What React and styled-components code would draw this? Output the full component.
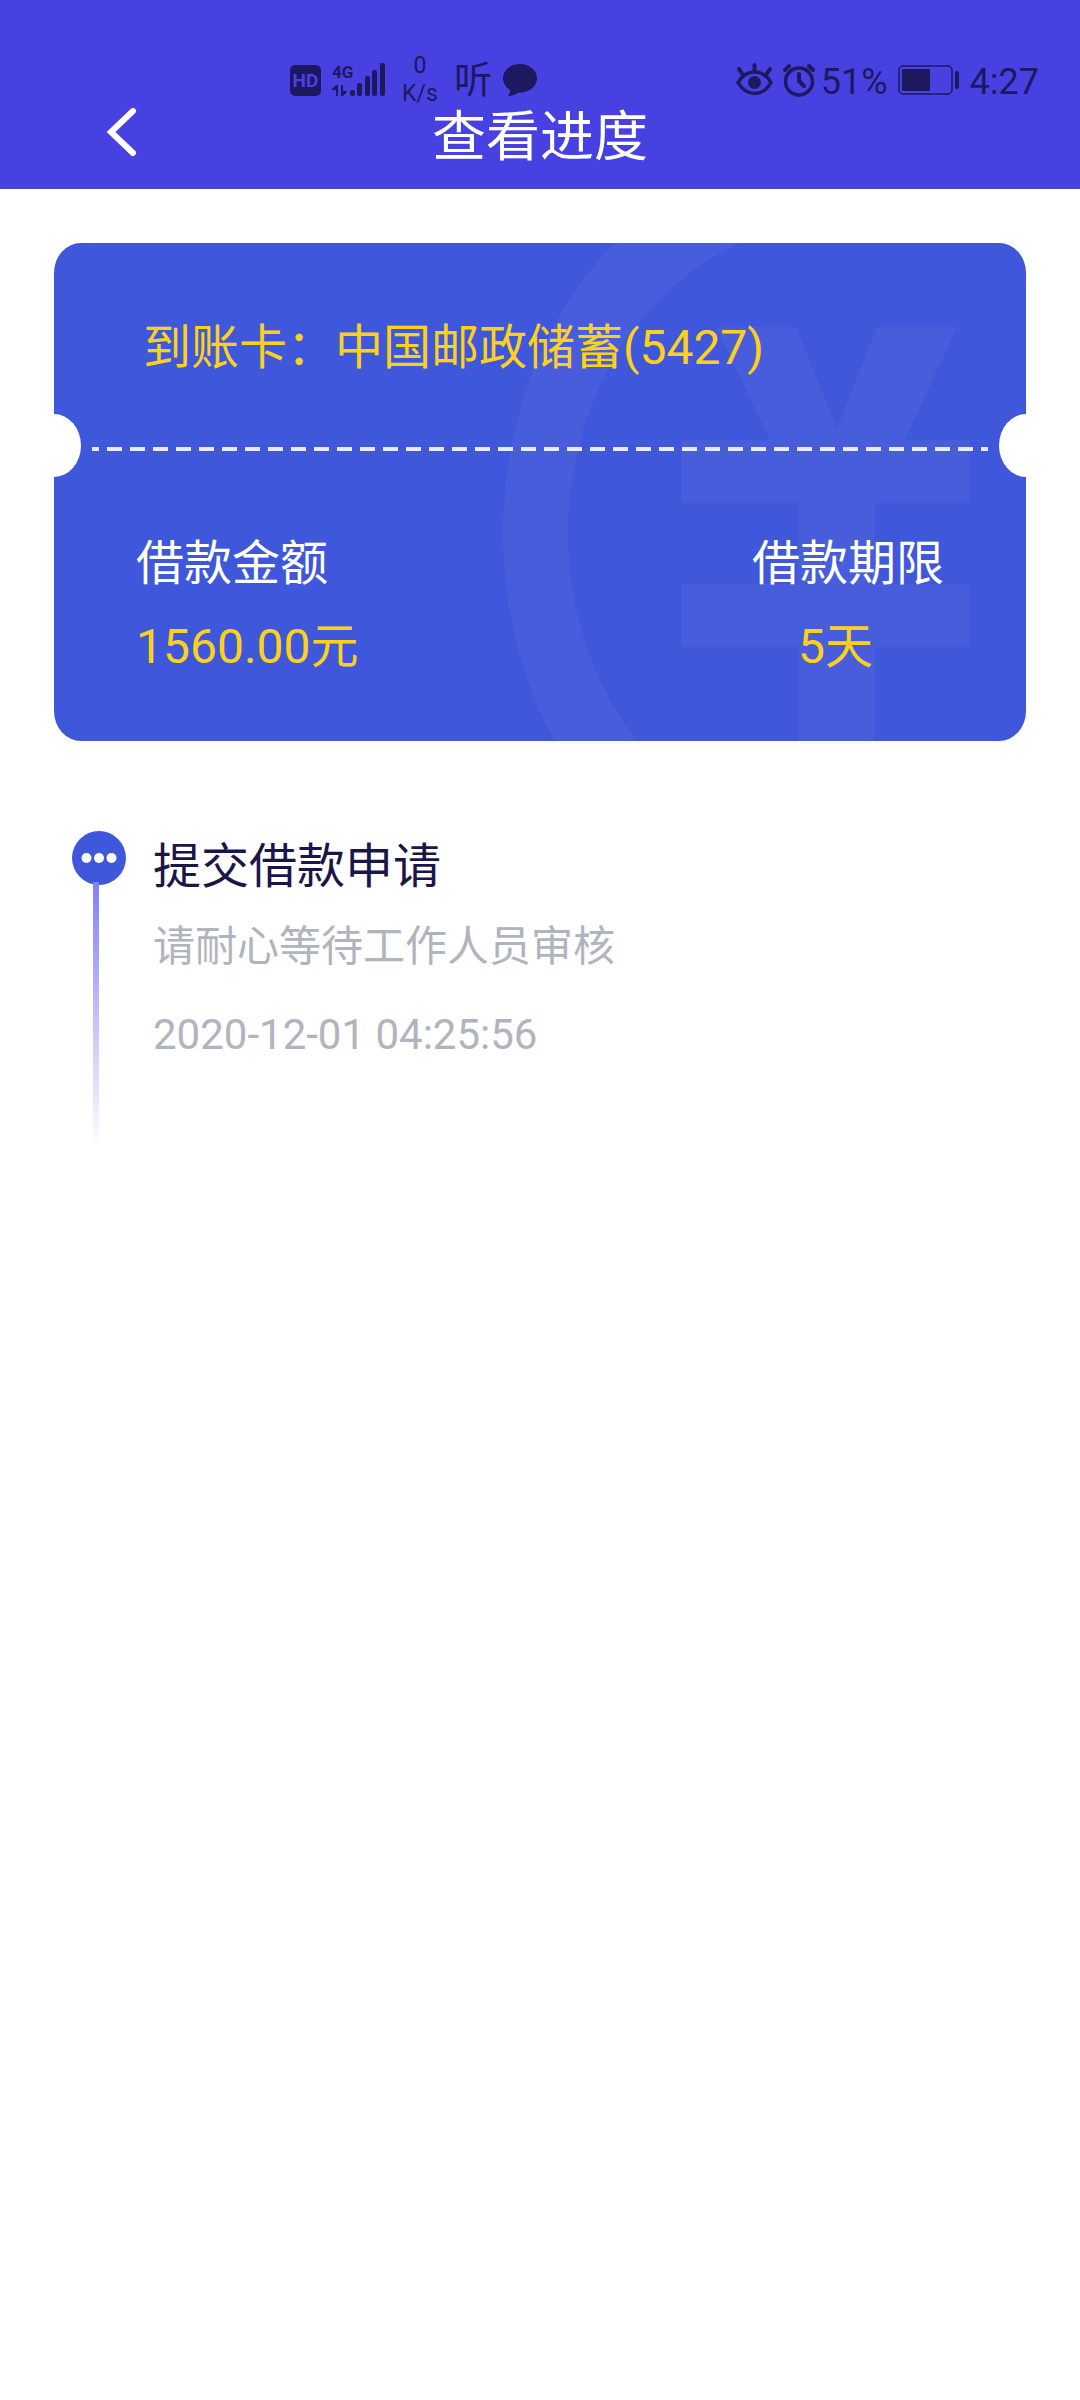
import React from 'react'
import styled, { createGlobalStyle } from 'styled-components'

const colors = {
  header: '#4741e2',
  status: '#1e1860',
  card: '#3f57da',
  accent: '#fcd11c',
  title: '#1b1648',
  muted: '#b0b4be'
}

const GlobalStyle = createGlobalStyle`
  * {
    box-sizing: border-box;
  }
  body {
    margin: 0;
    background: #ffffff;
    font-family: Roboto, 'Noto Sans CJK SC', sans-serif;
  }
`
const Header = styled.header`
  padding-top: 52px;
  padding-bottom: 21px;
  background: ${colors.header};
`
const StatusBar = styled.div`
  display: flex;
  align-items: center;
  justify-content: space-between;
  height: 56px;
  padding-left: 290px;
  padding-right: 41px;
  color: ${colors.status};
`
const StatusGroup = styled.div`
  display: flex;
  align-items: center;
  gap: ${p => p.$gap}px;
`
const HdBadge = styled.span`
  width: 31px;
  border-radius: 5px;
  background: ${colors.status};
  color: ${colors.header};
  font-size: 19px;
  font-weight: bold;
  line-height: 31px;
  text-align: center;
`
const Speed = styled.div`
  width: 46px;
  font-size: 23px;
  line-height: 28px;
  text-align: center;
`
const Listen = styled.span`
  font-size: 38px;
  line-height: 38px;
`
const StatusText = styled.span`
  padding-top: 4px;
  font-size: 36px;
  line-height: 36px;
`
const NavBar = styled.div`
  display: grid;
  grid-template-columns: 1fr auto 1fr;
  align-items: start;
`
const BackButton = styled.button`
  display: flex;
  justify-self: start;
  margin: 0 0 0 106px;
  padding: 0;
  border: 0;
  background: none;
  cursor: pointer;
`
const PageTitle = styled.h1`
  margin: 0;
  color: #ffffff;
  font-size: 54px;
  font-weight: normal;
  line-height: 60px;
`
const Main = styled.main`
  padding: 54px;
`
const Card = styled.section`
  position: relative;
  overflow: hidden;
  padding: 69px 27px 53px;
  border-radius: 27px / 30px;
  background: ${colors.card};
`
const Watermark = styled.svg`
  position: absolute;
  top: 0;
  right: 0;
  height: 100%;
`
const Notch = styled.span`
  position: absolute;
  top: 171px;
  ${p => p.$side}: -27px;
  width: 54px;
  height: 63px;
  border-radius: 50%;
  background: #ffffff;
`
const BankLine = styled.p`
  position: relative;
  margin: 0;
  padding-left: 62px;
  color: ${colors.accent};
  font-size: 48px;
  line-height: 72px;
`
const Divider = styled.div`
  position: relative;
  height: 4px;
  margin: 63px 11px 71px;
  background: repeating-linear-gradient(
    to right,
    #e9ebfd 0 15px,
    transparent 15px 23px
  ) -8px 0 / calc(100% + 8px) 100%;
`
const Facts = styled.dl`
  position: relative;
  display: flex;
  justify-content: space-between;
  margin: 0;
  padding: 0 55px;
  font-size: 48px;
  line-height: 83px;
`
const FactLabel = styled.dt`
  color: #ffffff;
`
const FactValue = styled.dd`
  margin: 0;
  padding-left: ${p => (p.$indent ? 46 : 0)}px;
  color: ${colors.accent};
`
const Timeline = styled.ol`
  margin: 90px 18px 0;
  padding: 0;
  list-style: none;
`
const Step = styled.li`
  display: flex;
  gap: 27px;
`
const Rail = styled.div`
  display: flex;
  flex-direction: column;
`
const RailLine = styled.div`
  flex: 1;
  width: 6px;
  margin: -3px 0 0 21px;
  background: linear-gradient(#8280f8, #ffffff);
`
const StepBody = styled.div`
  padding-bottom: 69px;
`
const StepTitle = styled.h2`
  margin: 0;
  color: ${colors.title};
  font-size: 48px;
  font-weight: normal;
  line-height: 72px;
`
const StepText = styled.p`
  margin: 0;
  color: ${colors.muted};
  font-size: 42px;
  line-height: 88px;
`
const SignalSvg = styled.svg`
  overflow: visible;
`

const SignalIcon = () => (
  <SignalSvg width='54' height='42' viewBox='0 -4 54 42' fill={colors.status}>
    <text x='0' y='15' fontFamily="'Liberation Sans Narrow', Roboto" fontSize='17' fontWeight='bold'>4G</text>
    <path d='M6 22v11H4v-6H0v-1l4-4zM9 22h2v6h4v1l-4 4H9z' />
    <rect x='18' y='27' width='5' height='6' rx='2' />
    <rect x='25' y='20' width='5' height='13' rx='2' />
    <rect x='33' y='13' width='5' height='20' rx='2' />
    <rect x='40' y='7' width='5' height='26' rx='2' />
    <rect x='48' y='0' width='5' height='33' rx='2' />
  </SignalSvg>
)

const ChatIcon = () => (
  <svg width='34' height='32' viewBox='0 0 34 32' fill={colors.status}>
    <path d='M17 0C7.500 0 0 6.200 0 14.300c0 5 2.800 9.200 7 11.700.4 2-.3 3.700-1.700 5.200-.3.400 0 .8.500.8 4.200-.4 7.300-1.800 9.600-3.500H17c9.500 0 17-6.200 17-14.200S26.500 0 17 0z' />
  </svg>
)

const EyeIcon = () => (
  <svg width='37' height='34' viewBox='0 0 37 34' fill='none' stroke={colors.status} strokeWidth='3.500' strokeLinecap='round'>
    <path d='M2 19.500C10 5.500 27 5.500 35 19.500C27 34 10 34 2 19.500z' strokeLinejoin='round' />
    <circle cx='18.500' cy='19.500' r='6.500' fill={colors.status} stroke='none' />
    <path d='M18.500 2v6M3 6l4 6M34 6l-4 6' strokeWidth='4' />
  </svg>
)

const AlarmIcon = () => (
  <svg width='32' height='34' viewBox='0 0 32 34' fill='none' stroke={colors.status} strokeWidth='3.500' strokeLinecap='round'>
    <circle cx='16' cy='18.500' r='13.500' />
    <path d='M16 11v7l5 5' strokeWidth='4' strokeLinejoin='round' />
    <path d='M2 7l4-4M30 7l-4-4' strokeWidth='4' />
  </svg>
)

const BatteryIcon = () => (
  <svg width='62' height='30' viewBox='0 0 62 30' fill={colors.status}>
    <rect x='1' y='1' width='53' height='28' rx='4' fill='none' stroke={colors.status} strokeWidth='1.500' />
    <rect x='4' y='4' width='28' height='22' rx='1' />
    <rect x='57' y='6' width='4' height='18' rx='2' />
  </svg>
)

const BackIcon = () => (
  <svg width='32' height='50' viewBox='0 2 32 50' fill='none' stroke='#ffffff' strokeWidth='6' strokeLinecap='round' strokeLinejoin='miter'>
    <path d='M27 5L5 26L27 47' />
  </svg>
)

const DotsIcon = () => (
  <svg width='54' height='54' viewBox='0 0 54 54' fill='#ffffff'>
    <circle cx='27' cy='27' r='27' fill={colors.card} />
    <circle cx='14.500' cy='27' r='5' />
    <circle cx='27' cy='27' r='5' />
    <circle cx='39.500' cy='27' r='5' />
  </svg>
)

const YuanWatermark = () => (
  <Watermark viewBox='0 0 972 498' fill='#485ddc' aria-hidden='true'>
    <path d='M783 -100A334 390 0 0 0 783 680V601A269 311 0 0 1 783 -21z' />
    <path d='M662 84H742L783 186L823 84H903L851 197H916V260H821V341H916V404H821V498H744V404H628V341H744V260H628V197H716z' />
  </Watermark>
)

const steps = [
  {
    title: '提交借款申请',
    text: '请耐心等待工作人员审核',
    time: '2020-12-01 04:25:56'
  }
]

const App = () => (
  <>
    <GlobalStyle />
    <Header>
      <StatusBar>
        <StatusGroup $gap={11}>
          <HdBadge>HD</HdBadge>
          <SignalIcon />
          <Speed>0<br />K/s</Speed>
          <Listen>听</Listen>
          <ChatIcon />
        </StatusGroup>
        <StatusGroup $gap={10}>
          <EyeIcon />
          <StatusGroup $gap={6}>
            <AlarmIcon />
            <StatusText>51%</StatusText>
          </StatusGroup>
          <BatteryIcon />
          <StatusText>4:27</StatusText>
        </StatusGroup>
      </StatusBar>
      <NavBar>
        <BackButton type='button' aria-label='返回'>
          <BackIcon />
        </BackButton>
        <PageTitle>查看进度</PageTitle>
      </NavBar>
    </Header>
    <Main>
      <Card>
        <YuanWatermark />
        <Notch $side='left' />
        <Notch $side='right' />
        <BankLine>到账卡：中国邮政储蓄(5427)</BankLine>
        <Divider />
        <Facts>
          <div>
            <FactLabel>借款金额</FactLabel>
            <FactValue>1560.00元</FactValue>
          </div>
          <div>
            <FactLabel>借款期限</FactLabel>
            <FactValue $indent>5天</FactValue>
          </div>
        </Facts>
      </Card>
      <Timeline>
        {steps.map(step => (
          <Step key={step.time}>
            <Rail>
              <DotsIcon />
              <RailLine />
            </Rail>
            <StepBody>
              <StepTitle>{step.title}</StepTitle>
              <StepText>{step.text}</StepText>
              <StepText as='time'>{step.time}</StepText>
            </StepBody>
          </Step>
        ))}
      </Timeline>
    </Main>
  </>
)

export default App
